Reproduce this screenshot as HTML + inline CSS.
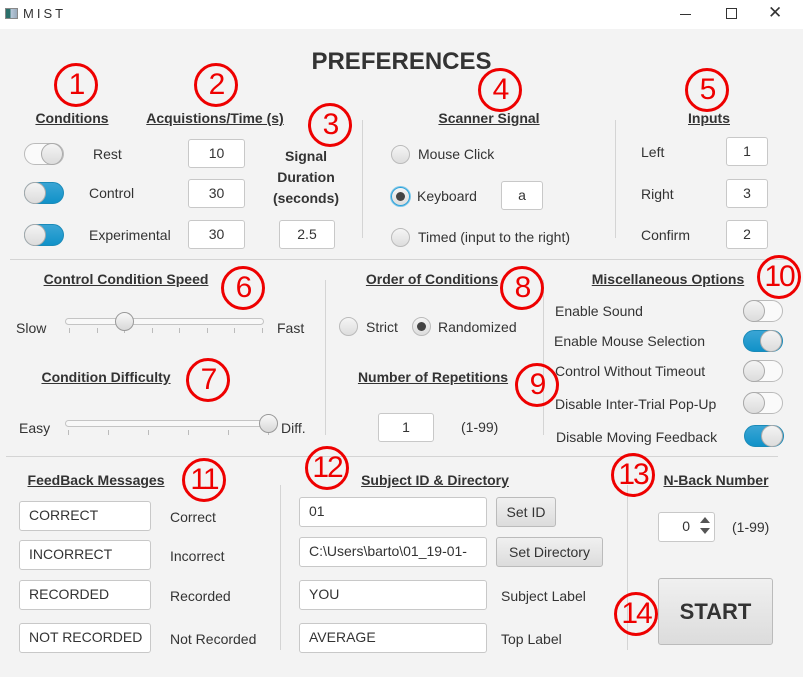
<!DOCTYPE html><html><head><style>
*{margin:0;padding:0;box-sizing:border-box}
body{width:803px;height:677px;background:#f3f3f3;font-family:"Liberation Sans",sans-serif;color:#333;position:relative;overflow:hidden;font-size:14px}
.a{position:absolute;white-space:nowrap}
.tb{position:absolute;left:0;top:0;width:803px;height:29px;background:#fff}
.h{position:absolute;font-weight:bold;text-decoration:underline;font-size:14px;transform:translateX(-50%);white-space:nowrap;color:#333}
.c{position:absolute;width:44px;height:44px;border:3px solid #e00;border-radius:50%;color:#e00;font-size:30px;line-height:38px;text-align:center;background:transparent;letter-spacing:-2px}
.in{position:absolute;background:#fff;border:1px solid #c8c8c8;border-radius:3px;font-size:14px;line-height:27px;color:#333}
.ctr{text-align:center}.lft{padding-left:9px}
.tg{position:absolute;width:40px;height:22px;border-radius:11px;border:1px solid #bbb;background:#fafafa}
.tg.on{background:linear-gradient(#3aa5d5,#1192c8);border-color:#1a8ab8}
.tg i{position:absolute;top:-1px;width:22px;height:22px;border-radius:50%;background:linear-gradient(#f4f4f4,#dcdcdc);border:1px solid #aaa}
.rd{position:absolute;width:19px;height:19px;border-radius:50%;border:1px solid #bbb;background:linear-gradient(#f5f5f5,#ddd)}
.rd.sel::after{content:"";position:absolute;left:4px;top:4px;width:9px;height:9px;border-radius:50%;background:#444}
.vl{position:absolute;width:1px;background:#d4d4d4}
.hl{position:absolute;height:1px;background:#d4d4d4}
.btn{position:absolute;border:1px solid #bbb;border-radius:3px;background:linear-gradient(#f0f0f0,#dcdcdc);text-align:center;font-size:14px;color:#333}
.track{position:absolute;height:7px;border:1px solid #c4c4c4;border-radius:4px;background:#f8f8f8}
.thumb{position:absolute;width:19px;height:19px;border-radius:50%;border:1px solid #999;background:linear-gradient(#f8f8f8,#d8d8d8)}
.tk{position:absolute;width:1px;height:5px;background:#bbb}
</style></head><body>
<div class="tb"></div>
<div class="a" style="left:5px;top:8px;width:13px;height:11px;background:linear-gradient(90deg,#2a6f6a 40%,#bcd 40%,#9ab);border:1px solid #888"></div>
<div class="a" style="left:23px;top:6px;font-size:13px;letter-spacing:3px;color:#333">MIST</div>
<div class="a" style="left:680px;top:14px;width:11px;height:1px;background:#333"></div>
<div class="a" style="left:726px;top:8px;width:11px;height:11px;border:1px solid #333"></div>
<div class="a" style="left:768px;top:3px;font-size:17px;color:#333">✕</div>

<div class="a" style="left:0;width:803px;top:48px;text-align:center;font-weight:bold;font-size:24px;color:#333">PREFERENCES</div>

<div class="h" style="left:72px;top:110px">Conditions</div>
<div class="h" style="left:215px;top:110px">Acquistions/Time (s)</div>
<div class="h" style="left:489px;top:110px">Scanner Signal</div>
<div class="h" style="left:709px;top:110px">Inputs</div>
<div class="h" style="left:126px;top:271px">Control Condition Speed</div>
<div class="h" style="left:432px;top:271px">Order of Conditions</div>
<div class="h" style="left:668px;top:271px">Miscellaneous Options</div>
<div class="h" style="left:433px;top:369px">Number of Repetitions</div>
<div class="h" style="left:106px;top:369px">Condition Difficulty</div>
<div class="h" style="left:96px;top:472px">FeedBack Messages</div>
<div class="h" style="left:435px;top:472px">Subject ID &amp; Directory</div>
<div class="h" style="left:716px;top:472px">N-Back Number</div>

<div class="vl" style="left:362px;top:120px;height:118px"></div>
<div class="vl" style="left:615px;top:120px;height:118px"></div>
<div class="hl" style="left:10px;top:259px;width:780px"></div>
<div class="vl" style="left:325px;top:280px;height:155px"></div>
<div class="vl" style="left:543px;top:280px;height:155px"></div>
<div class="hl" style="left:6px;top:456px;width:372px"></div>
<div class="hl" style="left:370px;top:456px;width:408px"></div>
<div class="vl" style="left:280px;top:485px;height:165px"></div>
<div class="vl" style="left:627px;top:485px;height:165px"></div>

<!-- conditions -->
<div class="tg" style="left:24px;top:143px"><i style="left:16px"></i></div>
<div class="tg on" style="left:24px;top:182px"><i style="left:-1px"></i></div>
<div class="tg on" style="left:24px;top:224px"><i style="left:-1px"></i></div>
<div class="a" style="left:93px;top:146px">Rest</div>
<div class="a" style="left:89px;top:185px">Control</div>
<div class="a" style="left:89px;top:227px">Experimental</div>
<div class="in ctr" style="left:188px;top:139px;width:57px;height:29px">10</div>
<div class="in ctr" style="left:188px;top:179px;width:57px;height:29px">30</div>
<div class="in ctr" style="left:188px;top:220px;width:57px;height:29px">30</div>
<div class="a" style="left:256px;width:100px;top:146px;text-align:center;font-weight:bold;line-height:21px">Signal<br>Duration<br>(seconds)</div>
<div class="in ctr" style="left:279px;top:220px;width:56px;height:29px">2.5</div>

<!-- scanner -->
<div class="rd" style="left:391px;top:145px"></div>
<div class="rd sel" style="left:391px;top:187px;border-color:#2aa0d8;box-shadow:0 0 0 1px #7cc7ea"></div>
<div class="rd" style="left:391px;top:228px"></div>
<div class="a" style="left:418px;top:146px">Mouse Click</div>
<div class="a" style="left:417px;top:188px">Keyboard</div>
<div class="a" style="left:418px;top:229px">Timed (input to the right)</div>
<div class="in ctr" style="left:501px;top:181px;width:42px;height:29px">a</div>

<!-- inputs -->
<div class="a" style="left:641px;top:144px">Left</div>
<div class="a" style="left:641px;top:186px">Right</div>
<div class="a" style="left:641px;top:227px">Confirm</div>
<div class="in ctr" style="left:726px;top:137px;width:42px;height:29px">1</div>
<div class="in ctr" style="left:726px;top:179px;width:42px;height:29px">3</div>
<div class="in ctr" style="left:726px;top:220px;width:42px;height:29px">2</div>

<!-- sliders -->
<div class="a" style="left:16px;top:320px">Slow</div>
<div class="a" style="left:277px;top:320px">Fast</div>
<div class="track" style="left:65px;top:318px;width:199px"></div>
<div class="tk" style="left:69px;top:328px"></div><div class="tk" style="left:97px;top:328px"></div><div class="tk" style="left:124px;top:328px"></div><div class="tk" style="left:152px;top:328px"></div><div class="tk" style="left:179px;top:328px"></div><div class="tk" style="left:207px;top:328px"></div><div class="tk" style="left:234px;top:328px"></div><div class="tk" style="left:262px;top:328px"></div>
<div class="thumb" style="left:115px;top:312px"></div>
<div class="a" style="left:19px;top:420px">Easy</div>
<div class="a" style="left:281px;top:420px">Diff.</div>
<div class="track" style="left:65px;top:420px;width:205px"></div>
<div class="tk" style="left:68px;top:430px"></div><div class="tk" style="left:108px;top:430px"></div><div class="tk" style="left:148px;top:430px"></div><div class="tk" style="left:188px;top:430px"></div><div class="tk" style="left:228px;top:430px"></div><div class="tk" style="left:268px;top:430px"></div>
<div class="thumb" style="left:259px;top:414px"></div>

<!-- order -->
<div class="rd" style="left:339px;top:317px"></div>
<div class="a" style="left:366px;top:319px">Strict</div>
<div class="rd sel" style="left:412px;top:317px"></div>
<div class="a" style="left:438px;top:319px">Randomized</div>
<div class="in ctr" style="left:378px;top:413px;width:56px;height:29px">1</div>
<div class="a" style="left:461px;top:419px">(1-99)</div>

<!-- misc -->
<div class="a" style="left:555px;top:303px">Enable Sound</div>
<div class="a" style="left:554px;top:333px">Enable Mouse Selection</div>
<div class="a" style="left:555px;top:363px">Control Without Timeout</div>
<div class="a" style="left:555px;top:396px">Disable Inter-Trial Pop-Up</div>
<div class="a" style="left:556px;top:429px">Disable Moving Feedback</div>
<div class="tg" style="left:743px;top:300px"><i style="left:-1px"></i></div>
<div class="tg on" style="left:743px;top:330px"><i style="left:16px"></i></div>
<div class="tg" style="left:743px;top:360px"><i style="left:-1px"></i></div>
<div class="tg" style="left:743px;top:392px"><i style="left:-1px"></i></div>
<div class="tg on" style="left:744px;top:425px"><i style="left:16px"></i></div>

<!-- feedback -->
<div class="in lft" style="left:19px;top:501px;width:132px;height:30px">CORRECT</div>
<div class="in lft" style="left:19px;top:540px;width:132px;height:30px">INCORRECT</div>
<div class="in lft" style="left:19px;top:580px;width:132px;height:30px">RECORDED</div>
<div class="in lft" style="left:19px;top:623px;width:132px;height:30px">NOT RECORDED</div>
<div class="a" style="left:170px;top:509px">Correct</div>
<div class="a" style="left:170px;top:548px">Incorrect</div>
<div class="a" style="left:170px;top:588px">Recorded</div>
<div class="a" style="left:170px;top:631px">Not Recorded</div>

<!-- subject -->
<div class="in lft" style="left:299px;top:497px;width:188px;height:30px">01</div>
<div class="in lft" style="left:299px;top:537px;width:188px;height:30px">C:\Users\barto\01_19-01-</div>
<div class="in lft" style="left:299px;top:580px;width:188px;height:30px">YOU</div>
<div class="in lft" style="left:299px;top:623px;width:188px;height:30px">AVERAGE</div>
<div class="btn" style="left:496px;top:497px;width:60px;height:30px;line-height:28px">Set ID</div>
<div class="btn" style="left:496px;top:537px;width:107px;height:30px;line-height:28px">Set Directory</div>
<div class="a" style="left:501px;top:588px">Subject Label</div>
<div class="a" style="left:501px;top:631px">Top Label</div>

<!-- nback -->
<div class="in" style="left:658px;top:512px;width:57px;height:30px;text-align:right;padding-right:24px">0</div>
<div class="a" style="left:700px;top:517px;width:0;height:0;border-left:5px solid transparent;border-right:5px solid transparent;border-bottom:6px solid #555"></div>
<div class="a" style="left:700px;top:528px;width:0;height:0;border-left:5px solid transparent;border-right:5px solid transparent;border-top:6px solid #555"></div>
<div class="a" style="left:732px;top:519px">(1-99)</div>
<div class="btn" style="left:658px;top:578px;width:115px;height:67px;line-height:65px;font-weight:bold;font-size:22px">START</div>

<!-- circles -->
<div class="c" style="left:54px;top:63px">1</div>
<div class="c" style="left:194px;top:63px">2</div>
<div class="c" style="left:308px;top:103px">3</div>
<div class="c" style="left:478px;top:68px">4</div>
<div class="c" style="left:685px;top:68px">5</div>
<div class="c" style="left:221px;top:266px">6</div>
<div class="c" style="left:186px;top:358px">7</div>
<div class="c" style="left:500px;top:266px">8</div>
<div class="c" style="left:515px;top:363px">9</div>
<div class="c" style="left:757px;top:255px">10</div>
<div class="c" style="left:182px;top:458px">11</div>
<div class="c" style="left:305px;top:446px">12</div>
<div class="c" style="left:611px;top:453px">13</div>
<div class="c" style="left:614px;top:592px">14</div>
</body></html>
